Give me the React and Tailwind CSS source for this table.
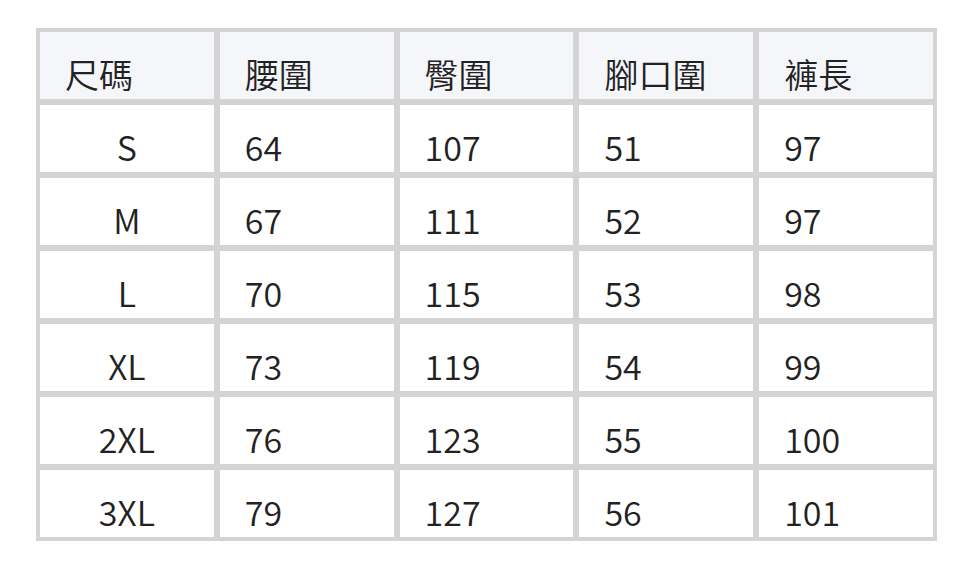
const header = ["尺碼", "腰圍", "臀圍", "腳口圍", "褲長"];

const rows = [
  ["S", "64", "107", "51", "97"],
  ["M", "67", "111", "52", "97"],
  ["L", "70", "115", "53", "98"],
  ["XL", "73", "119", "54", "99"],
  ["2XL", "76", "123", "55", "100"],
  ["3XL", "79", "127", "56", "101"],
];

export default function App() {
  return (
    <div className="w-[972px] h-[568px] bg-white pl-[36px] pt-[28px]" style={{ fontFamily: '"Noto Sans CJK TC", "Noto Sans", sans-serif' }}>
      <div className="w-[901px] grid grid-cols-5 gap-[6px] p-[4px] bg-[#d4d4d4] text-[34px] font-[350] text-[#222222]">
        {header.map((h) => (
          <div key={h} className="h-[67px] bg-[#f5f6fa] flex items-end pl-[25px] leading-normal">
            {h}
          </div>
        ))}
        {rows.map((r) =>
          r.map((c, i) => (
            <div
              key={r[0] + i}
              className={
                i === 0
                  ? "h-[67px] bg-white flex items-end justify-center leading-normal"
                  : "h-[67px] bg-white flex items-end pl-[25px] leading-normal"
              }
            >
              {c}
            </div>
          ))
        )}
      </div>
    </div>
  );
}
